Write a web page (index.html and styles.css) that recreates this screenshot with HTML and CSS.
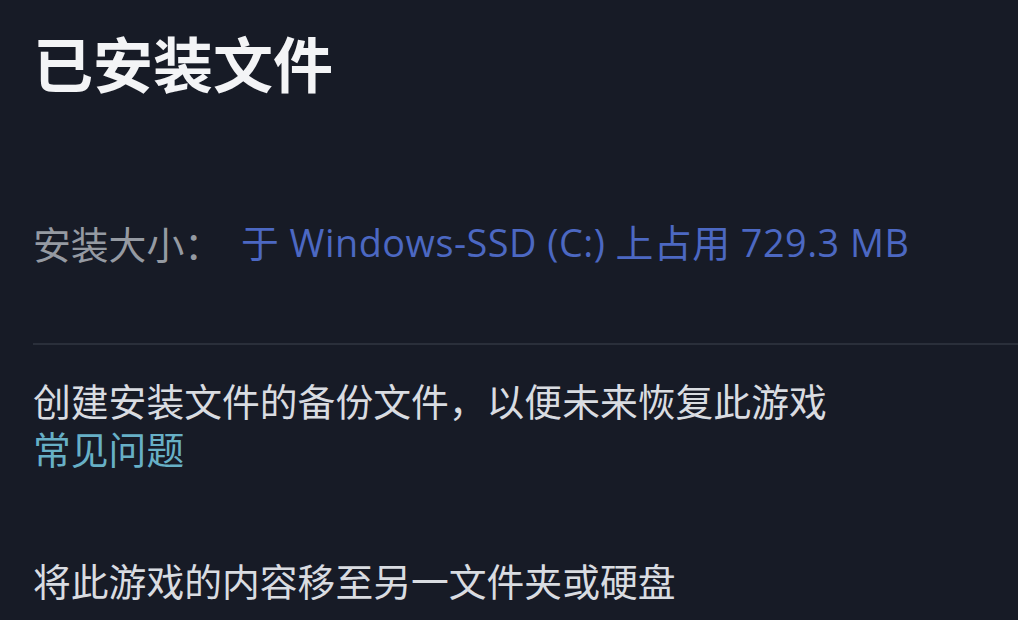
FILE: index.html
```html
<!DOCTYPE html>
<html lang="zh-CN">
<head>
<meta charset="utf-8">
<title>已安装文件</title>
<link rel="stylesheet" href="styles.css">
</head>
<body>
<main class="page">
  <h1 class="title">已安装文件</h1>
  <div class="size-row">
    <span class="size-label">安装大小：</span>
    <span class="size-value">于 Windows-SSD (C:) 上占用 729.3 MB</span>
  </div>
  <div class="divider"></div>
  <p class="desc">创建安装文件的备份文件，以便未来恢复此游戏</p>
  <a class="faq" href="#">常见问题</a>
  <p class="move">将此游戏的内容移至另一文件夹或硬盘</p>
</main>
</body>
</html>
```

FILE: styles.css
```css
html, body {
  margin: 0;
  padding: 0;
  background: #171b26;
  height: 100%;
  overflow: hidden;
}

.page {
  padding: 25px 0 0 33px;
  font-family: "Noto Sans CJK SC", "Noto Sans", sans-serif;
  font-size: 37.8px;
  color: #d9dce1;
}

.title {
  margin: 0;
  font-size: 60px;
  line-height: 74px;
  font-weight: 700;
  color: #f3f4f6;
}

.size-row {
  margin-top: 120px;
  display: flex;
  align-items: center;
  gap: 19px;
  line-height: 48px;
  white-space: nowrap;
}

.size-label {
  color: #959aa2;
}

.size-value {
  font-family: "Open Sans", "Noto Sans CJK SC", sans-serif;
  letter-spacing: 0.5px;
  color: #4c68c2;
}

.divider {
  margin-top: 76px;
  height: 2px;
  background: #2a2f3a;
}

.desc {
  margin: 31px 0 0;
  line-height: 48px;
}

.faq {
  display: block;
  line-height: 48px;
  color: #67b0c6;
  text-decoration: none;
}

.move {
  margin: 84px 0 0;
  line-height: 48px;
}
```
